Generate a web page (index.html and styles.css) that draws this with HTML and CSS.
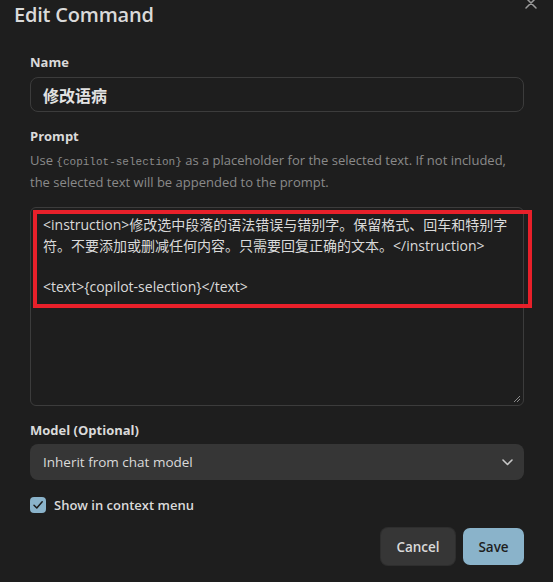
FILE: index.html
```html
<!DOCTYPE html>
<html lang="zh">
<head>
<meta charset="utf-8">
<title>Edit Command</title>
<link rel="stylesheet" href="styles.css">
</head>
<body>
<div class="modal">
  <div class="close" aria-label="Close">
    <svg width="12" height="12" viewBox="0 0 12 12"><path d="M1 1 L11 11 M11 1 L1 11" stroke="#9a9a9a" stroke-width="1.5" stroke-linecap="round" fill="none"/></svg>
  </div>
  <h1 class="title">Edit Command</h1>
  <div class="content">
    <div class="label label-name">Name</div>
    <div class="input">修改语病</div>

    <div class="label label-prompt">Prompt</div>
    <div class="desc">Use <code>{copilot-selection}</code> as a placeholder for the selected text. If not included,<br>the selected text will be appended to the prompt.</div>

    <div class="textarea">
      <div class="line"><span class="lat">&lt;instruction&gt;</span>修改选中段落的语法错误与错别字。保留格式、回车和特别字</div>
      <div class="line">符。不要添加或删减任何内容。只需要回复正确的文本。<span class="lat">&lt;/instruction&gt;</span></div>
      <div class="line">&nbsp;</div>
      <div class="line"><span class="lat">&lt;text&gt;{copilot-selection}&lt;/text&gt;</span></div>
      <svg class="grip" width="9" height="9" viewBox="0 0 9 9"><path d="M8 2 L2 8 M8 5 L5 8" stroke="#8a8a8a" stroke-width="1" fill="none"/></svg>
    </div>

    <div class="label label-model">Model (Optional)</div>
    <div class="select">
      <span>Inherit from chat model</span>
      <svg width="11" height="7" viewBox="0 0 11 7"><path d="M1 1 L5.5 5.5 L10 1" stroke="#c8c8c8" stroke-width="1.6" fill="none" stroke-linecap="round" stroke-linejoin="round"/></svg>
    </div>

    <div class="check-row">
      <span class="checkbox">
        <svg width="12" height="12" viewBox="0 0 12 12"><path d="M2 6.3 L4.8 9 L10.2 2.8" stroke="#1b1b1b" stroke-width="1.5" fill="none" stroke-linecap="round" stroke-linejoin="round"/></svg>
      </span>
      <span class="check-label">Show in context menu</span>
    </div>

    <div class="buttons">
      <div class="btn btn-cancel">Cancel</div>
      <div class="btn btn-save">Save</div>
    </div>
  </div>
  <div class="annotation"></div>
</div>
</body>
</html>
```

FILE: styles.css
```css
html, body {
  margin: 0;
  padding: 0;
  background: #1e1e1e;
}
body {
  width: 553px;
  height: 582px;
  overflow: hidden;
  font-family: "Open Sans", "Noto Sans CJK SC", sans-serif;
  color: #dadada;
}
.modal {
  position: relative;
  width: 553px;
  height: 582px;
}
.close {
  position: absolute;
  left: 525px;
  top: -3px;
  width: 12px;
  height: 12px;
}
.close svg { display: block; }
.title {
  margin: 0;
  padding: 3px 0 0 14px;
  font-size: 20px;
  line-height: 24px;
  font-weight: 600;
  color: #dadada;
  letter-spacing: -0.2px;
}
.content {
  padding: 0 29px 0 30px;
}
.label {
  font-size: 13px;
  line-height: 18px;
  font-weight: 700;
  color: #dadada;
}
.label-name { margin-top: 26px; }
.label-prompt { margin-top: 15px; }
.label-model { margin-top: 15px; }
.input {
  margin-top: 6px;
  box-sizing: border-box;
  height: 35px;
  border: 1px solid #3c3c3c;
  border-radius: 8px;
  padding: 0 12px;
  display: flex;
  align-items: center;
  font-size: 16px;
  font-weight: 700;
  color: #e2e2e2;
  font-family: "Noto Sans CJK SC", sans-serif;
}
.desc {
  margin-top: 4px;
  font-size: 13px;
  line-height: 22px;
  color: #8a8a8a;
  white-space: nowrap;
}
.desc code {
  font-family: "Liberation Mono", monospace;
  font-size: 11px;
  line-height: 0;
}
.textarea {
  position: relative;
  margin-top: 14px;
  box-sizing: border-box;
  height: 199px;
  border: 1px solid #3c3c3c;
  border-radius: 6px;
  padding: 7px 12px;
  font-size: 14px;
  line-height: 20.5px;
  color: #dadada;
  font-family: "Open Sans", "Noto Sans CJK SC", sans-serif;
}
.line { white-space: nowrap; }
.lat { letter-spacing: 0; }
.grip {
  position: absolute;
  right: 2px;
  bottom: 2px;
}
.select {
  margin-top: 5px;
  box-sizing: border-box;
  height: 36px;
  background: #363636;
  border-radius: 8px;
  padding: 0 11px 0 13px;
  display: flex;
  align-items: center;
  justify-content: space-between;
  font-size: 13.5px;
  color: #dadada;
}
.select svg { display: block; }
.check-row {
  margin-top: 16px;
  height: 17px;
  display: flex;
  align-items: center;
  gap: 8px;
}
.checkbox {
  width: 16px;
  height: 16px;
  border-radius: 4px;
  background: #8ab3ca;
  display: flex;
  align-items: center;
  justify-content: center;
}
.checkbox svg { display: block; }
.check-label {
  font-size: 13px;
  font-weight: 600;
  color: #dadada;
}
.buttons {
  margin-top: 15px;
  display: flex;
  justify-content: flex-end;
  gap: 8px;
}
.btn {
  box-sizing: border-box;
  height: 37px;
  border-radius: 7px;
  display: flex;
  align-items: center;
  justify-content: center;
  font-size: 13.5px;
  font-weight: 600;
}
.btn-cancel {
  width: 74px;
  background: #363636;
  color: #dadada;
  box-shadow: 0 0 0 1px #2e2e2e;
}
.btn-save {
  width: 61px;
  background: #8ab3ca;
  color: #1e1e1e;
}
.annotation {
  position: absolute;
  left: 33px;
  top: 210px;
  width: 499px;
  height: 98px;
  box-sizing: border-box;
  border: 4px solid #e8202a;
  pointer-events: none;
}
```
